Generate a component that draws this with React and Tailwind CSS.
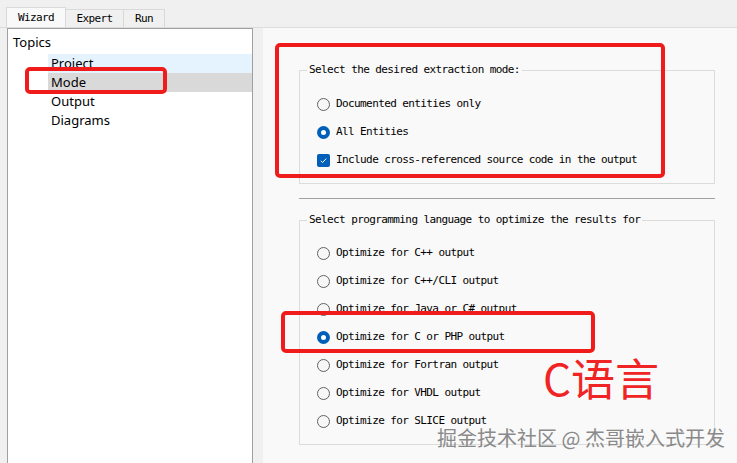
import React from "react";

const mono = "font-['DejaVu_Sans_Mono','Liberation_Mono',monospace] text-[11px] tracking-[-0.6px] text-black";

function Radio({ checked }) {
  if (checked) {
    return (
      <div className="w-[13px] h-[13px] rounded-full bg-[#005fb8] flex items-center justify-center shrink-0">
        <div className="w-[5px] h-[5px] rounded-full bg-white" />
      </div>
    );
  }
  return <div className="w-[13px] h-[13px] rounded-full border border-[#626262] bg-[#f7f7f7] shrink-0" />;
}

function Check() {
  return (
    <div className="w-[13px] h-[13px] rounded-[2px] bg-[#005fb8] flex items-center justify-center shrink-0">
      <svg width="9" height="9" viewBox="0 0 9 9">
        <path d="M1.8 4.8 L3.6 6.5 L7.2 2.6" fill="none" stroke="white" strokeWidth="1" />
      </svg>
    </div>
  );
}

function Row({ children, control }) {
  return (
    <div className="h-[28px] flex items-center pl-[17px] gap-[6px]">
      {control}
      <span className={mono + " whitespace-pre leading-[14px]"}>{children}</span>
    </div>
  );
}

function Group({ title, children, pb, pt }) {
  return (
    <fieldset className={"border border-[#dcdcdc] w-[416px] " + pb}>
      <legend className={mono + " ml-[7px] px-[2px] leading-[14px] whitespace-pre"}>{title}</legend>
      <div className={pt}>{children}</div>
    </fieldset>
  );
}

export default function App() {
  const langs = [
    ["Optimize for C++ output", false],
    ["Optimize for C++/CLI output", false],
    ["Optimize for Java or C# output", false],
    ["Optimize for C or PHP output", true],
    ["Optimize for Fortran output", false],
    ["Optimize for VHDL output", false],
    ["Optimize for SLICE output", false],
  ];
  return (
    <div className="w-[737px] h-[463px] bg-[#f0f0f0] relative overflow-hidden">
      {/* tabs */}
      <div className="h-[27px] flex items-end pl-[6px]">
        <div className="h-[20px] w-[60px] bg-[#f9f9f9] border border-b-0 border-[#d9d9d9] flex items-center justify-center">
          <span className={mono + " leading-[14px]"}>Wizard</span>
        </div>
        <div className="h-[18px] w-[58px] border border-b-0 border-l-0 border-[#d9d9d9] flex items-center justify-center">
          <span className={mono + " leading-[14px]"}>Expert</span>
        </div>
        <div className="h-[18px] w-[41px] border border-b-0 border-l-0 border-[#d9d9d9] flex items-center justify-center">
          <span className={mono + " leading-[14px]"}>Run</span>
        </div>
      </div>
      <div className="flex h-[436px] border-t border-[#dcdcdc]">
        {/* tree */}
        <div className="ml-[7px] w-[246px] bg-white border border-b-0 border-[#a0a0a0] font-['Noto_Sans',sans-serif] text-[13px] text-black">
          <div className="pl-[5px] pt-[4px] h-[23px] leading-[19px]">Topics</div>
          <div className="ml-[40px] mt-[2px]">
            <div className="h-[19px] leading-[19px] pl-[3px] bg-[#e5f3ff]">Project</div>
            <div className="h-[19px] leading-[19px] pl-[3px] bg-[#d9d9d9]">Mode</div>
            <div className="h-[19px] leading-[19px] pl-[3px]">Output</div>
            <div className="h-[19px] leading-[19px] pl-[3px]">Diagrams</div>
          </div>
        </div>
        {/* right panel */}
        <div className="ml-[10px] flex-1 bg-[#f9f9f9] pl-[36px] pt-[35px]">
          <Group title="Select the desired extraction mode:" pt="pt-[13px]" pb="pb-[9px]">
            <Row control={<Radio checked={false} />}>Documented entities only</Row>
            <Row control={<Radio checked />}>All Entities</Row>
            <Row control={<Check />}>Include cross-referenced source code in the output</Row>
          </Group>
          <div className="w-[416px] h-px bg-[#a0a0a0] mt-[14px] mb-[14px]" />
          <Group title="Select programming language to optimize the results for" pt="pt-[12px]" pb="pb-[9px]">
            {langs.map(([t, c]) => (
              <Row key={t} control={<Radio checked={c} />}>{t}</Row>
            ))}
          </Group>
        </div>
      </div>

      {/* annotations */}
      <div className="absolute left-[25px] top-[67px] w-[142px] h-[27px] border-[4px] border-[#f01c1c] rounded-[5px]" />
      <div className="absolute left-[275px] top-[43px] w-[390px] h-[135px] border-[4px] border-[#f01c1c] rounded-[5px]" />
      <div className="absolute left-[281px] top-[311px] w-[314px] h-[42px] border-[4px] border-[#f01c1c] rounded-[5px]" />
      <div className="absolute left-[543px] top-[355px] leading-none text-[44px] text-[#f02424] font-['Noto_Sans_CJK_SC',sans-serif]">C语言</div>
      <div className="absolute left-[437px] top-[428px] leading-[20px] text-[20px] text-[#8a8a8a] font-['Noto_Sans_CJK_SC',sans-serif] whitespace-pre">掘金技术社区 @ 杰哥嵌入式开发</div>
    </div>
  );
}
